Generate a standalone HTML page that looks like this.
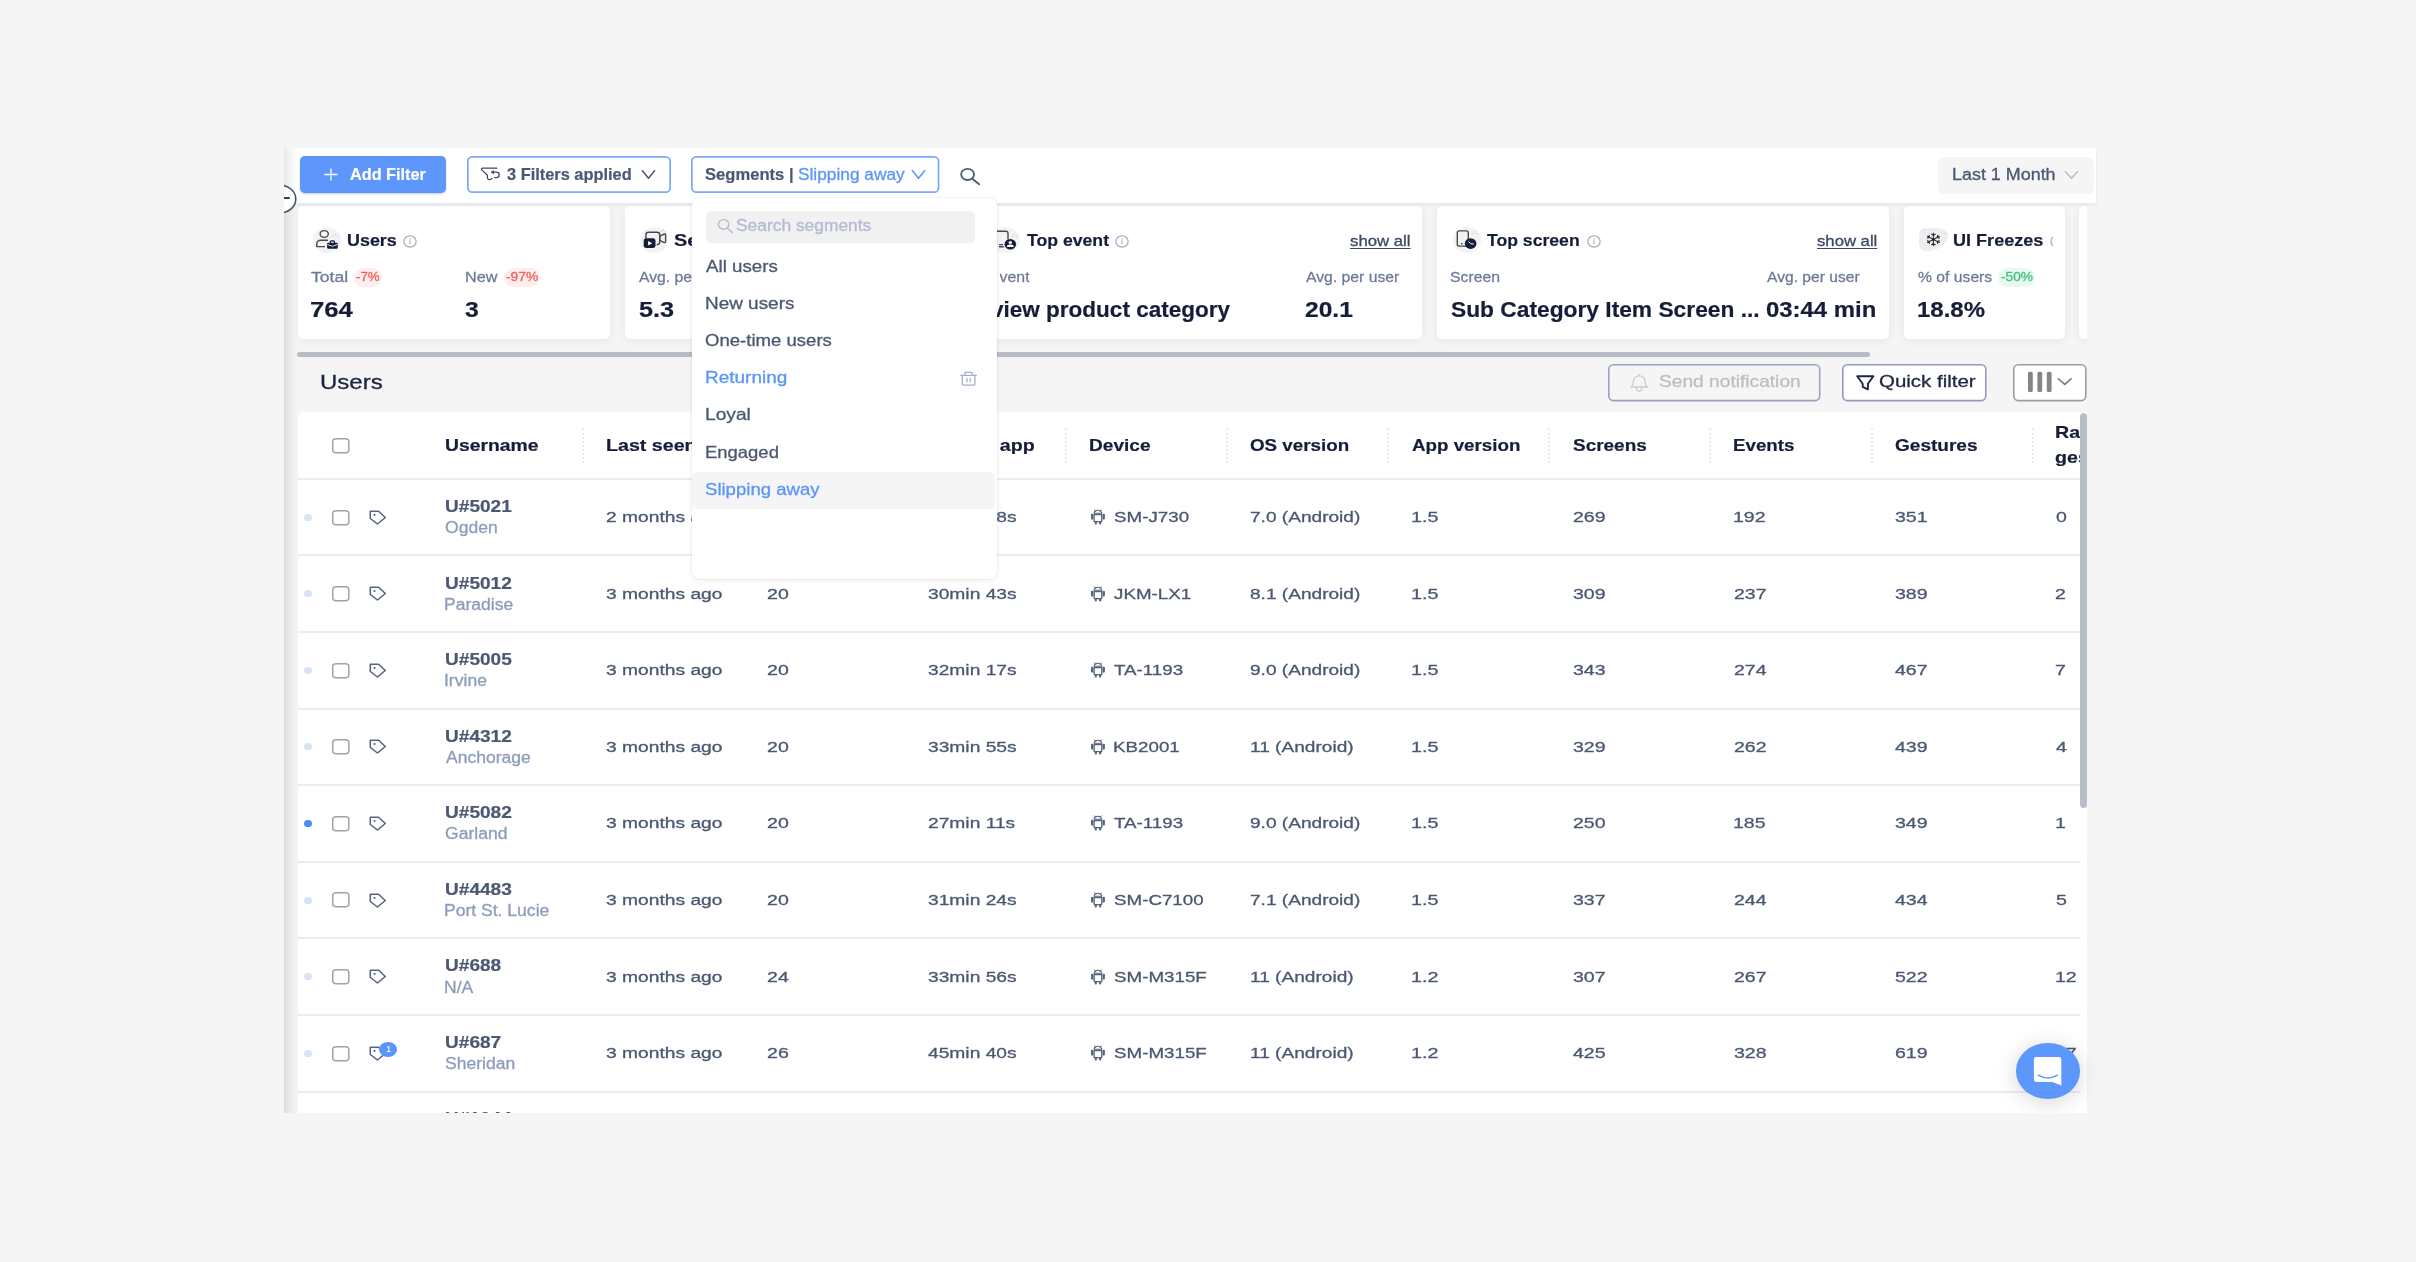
<!DOCTYPE html>
<html lang="en"><head><meta charset="utf-8"><title>Users</title>
<style>
*{box-sizing:border-box;margin:0;padding:0}
html,body{width:2416px;height:1262px;overflow:hidden;background:#f5f5f5}
body{position:relative;font-family:"Liberation Sans",sans-serif}
.abs,.t,svg.i{position:absolute}
.t{white-space:nowrap;line-height:1;transform-origin:0 50%;display:block}
#shot{will-change:transform;position:absolute;left:0;top:0;width:2416px;height:1262px;clip-path:polygon(284px 148px,2097px 148px,2097px 1112.5px,284px 1112.5px)}
#tbl{position:absolute;left:0;top:0;width:2416px;height:1262px;clip-path:polygon(297px 412px,2080.4px 412px,2080.4px 1113px,297px 1113px)}
#cards{position:absolute;left:0;top:0;width:2416px;height:1262px;clip-path:polygon(297px 200px,2087px 200px,2087px 362px,297px 362px)}
.card{position:absolute;top:206px;height:133px;background:#fff;border-radius:5px;box-shadow:0 1px 10px rgba(0,0,0,.07)}
.blob{position:absolute;width:28px;height:26px;border-radius:50%;background:#f3f3f3}
.btn{position:absolute;border-radius:5px}
.badge{position:absolute;border-radius:10px}
.row{position:absolute;left:297.5px;width:1783px;height:2px;background:#ececec}
.dot{position:absolute;left:304px;width:8.3px;height:7px;border-radius:50%;background:#d8e3f3}
.sep{position:absolute;top:428px;height:35px;width:0;border-left:2.6px dotted #e9e9e9}
.r{-webkit-text-stroke:.3px currentColor}
.b{font-weight:700;-webkit-text-stroke:.2px currentColor}
.u{text-decoration:underline;text-underline-offset:1.5px;text-decoration-thickness:1px}
</style></head>
<body>
<div id="shot">
<section id="cards" aria-label="Summary cards">
<div class="card" style="left:297.5px;width:312.8px"></div>
<div class="card" style="left:625px;width:337.0px"></div>
<div class="card" style="left:977px;width:445.4px"></div>
<div class="card" style="left:1437.2px;width:452.2px"></div>
<div class="card" style="left:1904.2px;width:161.1px"></div>
<div class="card" style="left:2079.2px;width:220.8px"></div>
<div class="blob" style="left:313.3px;top:227px"></div>
<div class="blob" style="left:639.8px;top:227px"></div>
<div class="blob" style="left:992px;top:227px"></div>
<div class="blob" style="left:1452.7px;top:227px"></div>
<svg class="i" style="left:312px;top:226px" width="30" height="28" viewBox="312 226 30 28"><ellipse cx="324.2" cy="234" rx="4.1" ry="3.4" fill="none" stroke="#4a4a4a" stroke-width="1.4"/><path d="M328 240.3h-7.4a3.8 3.4 0 0 0 -3.8 3.4v2.9h8.2" fill="none" stroke="#4a4a4a" stroke-width="1.4" stroke-linejoin="round"/><path d="M330.3 243v-1.1a1 1 0 0 1 1-1h2.2a1 1 0 0 1 1 1v1.1" fill="none" stroke="#151d38" stroke-width="1.2"/><rect x="327.1" y="242.7" width="10.6" height="6" rx="1.2" fill="#151d38"/><path d="M327.6 244.6l4.8 1.7 4.8-1.7" fill="none" stroke="#fff" stroke-width=".9"/><path d="M332.6 236l1.3-.5M335.2 233.6l.5 1M337.2 235.8l1.4.5" stroke="#c5d3ee" stroke-width="1" stroke-linecap="round" fill="none"/></svg>
<svg class="i" style="left:640px;top:226px" width="30" height="28" viewBox="640 226 30 28"><path d="M645.9 238.5v-3.7a2.8 2.5 0 0 1 2.8-2.5h8.2a2.8 2.5 0 0 1 2.8 2.5v7.4a2.8 2.5 0 0 1 -2.6 2.4" fill="none" stroke="#4a4a4a" stroke-width="1.4" stroke-linecap="round"/><path d="M659.8 236.2l4.6-2.2a.9 .9 0 0 1 1.2 .8v7a.9 .9 0 0 1 -1.2 .8l-4.6-2.2z" fill="none" stroke="#4a4a4a" stroke-width="1.4" stroke-linejoin="round"/><rect x="643.7" y="238.3" width="11.8" height="9.6" rx="2.6" fill="#151d38"/><path d="M648.1 241l4.2 2.2-4.2 2.2z" fill="#fff"/><path d="M660.4 231.8l1.3-.5M663 229.4l.5 1M665 231.6l1.4.5" stroke="#c5d3ee" stroke-width="1" stroke-linecap="round" fill="none"/></svg>
<svg class="i" style="left:992px;top:226px" width="30" height="28" viewBox="992 226 30 28"><path d="M996.5 231.3h9.3a2.2 2 0 0 1 2.2 2v6.2M999 246.8h5M999 244.6h4" fill="none" stroke="#4a4a4a" stroke-width="1.4"/><ellipse cx="1010.3" cy="244.2" rx="5.8" ry="5.3" fill="#151d38"/><ellipse cx="1010.3" cy="242.4" rx="1.7" ry="1.5" fill="#fff"/><path d="M1006.9 246.9q0-2.3 3.4-2.3t3.4 2.3z" fill="#fff"/><path d="M1011.6 236.6l1.3-.5M1014.2 234.2l.5 1M1016.2 236.4l1.4.5" stroke="#c5d3ee" stroke-width="1" stroke-linecap="round" fill="none"/></svg>
<svg class="i" style="left:1452px;top:226px" width="30" height="28" viewBox="1452 226 30 28"><rect x="1457.3" y="230.9" width="11" height="15.2" rx="1.8" fill="none" stroke="#4a4a4a" stroke-width="1.4"/><rect x="1461" y="243" width="1.6" height="1.4" fill="#4a4a4a"/><ellipse cx="1470.6" cy="243.6" rx="5.8" ry="5.3" fill="#151d38"/><path d="M1468.7 241.9q1 2.4 4.6 2.3" fill="none" stroke="#fff" stroke-width="1" stroke-linecap="round"/><path d="M1472.2 233.9l1.3-.5M1474.8 231.5l.5 1M1476.8 233.7l1.4.5" stroke="#c5d3ee" stroke-width="1" stroke-linecap="round" fill="none"/></svg>
<svg class="i" style="left:1916px;top:224px" width="36" height="30" viewBox="1916 224 36 30"><path d="M1919 234q1-6 12-6.2q14-.4 17 5.2q1.5 6-5 12q-7 6.5-18 6q-6-1-6-8.5z" fill="#eeeeee"/><path d="M1933.4 239.4l0 6.1M1933.4 243.55l-1.72 1.09M1933.4 243.55l1.72 1.09M1933.4 239.4l-5.89 3.05M1929.4 241.47l-1.9 -0.8M1929.4 241.47l-0.18 1.89M1933.4 239.4l-5.89 -3.05M1929.4 237.33l-0.18 -1.89M1929.4 237.33l-1.9 0.8M1933.4 239.4l-0 -6.1M1933.4 235.25l1.72 -1.09M1933.4 235.25l-1.72 -1.09M1933.4 239.4l5.89 -3.05M1937.4 237.33l1.9 0.8M1937.4 237.33l0.18 -1.89M1933.4 239.4l5.89 3.05M1937.4 241.47l0.18 1.89M1937.4 241.47l1.9 -0.8" fill="none" stroke="#2b2f3c" stroke-width="1.15" stroke-linecap="round"/><circle cx="1933.4" cy="239.4" r="1.1" fill="#151d38"/><path d="M1921.6 230.8l1-.8M1924 228.8l.6 .9M1924 232.6l.6 .6" stroke="#c5d3ee" stroke-width="1" stroke-linecap="round"/><ellipse cx="1944.9" cy="233.6" rx="1" ry=".9" fill="#c5d3ee"/></svg>
<span class="t b" style="left:346.5px;top:232.0px;font-size:17.3px;transform:scaleX(1.036);color:#151d38;">Users</span>
<span class="t b" style="left:674.4px;top:232.0px;font-size:17.3px;transform:scaleX(1.150);color:#151d38;">Sessions</span>
<span class="t b" style="left:1026.5px;top:232.0px;font-size:17.3px;transform:scaleX(1.021);color:#151d38;">Top event</span>
<span class="t b" style="left:1487.0px;top:232.0px;font-size:17.3px;transform:scaleX(1.019);color:#151d38;">Top screen</span>
<span class="t b" style="left:1953.3px;top:232.0px;font-size:17.3px;transform:scaleX(1.045);color:#151d38;">UI Freezes</span>
<span class="t r" style="left:310.6px;top:268.7px;font-size:15.26px;transform:scaleX(1.150);color:#6d7b99;">Total</span>
<span class="t r" style="left:464.5px;top:268.7px;font-size:15.26px;transform:scaleX(1.061);color:#6d7b99;">New</span>
<span class="t r" style="left:638.7px;top:268.7px;font-size:15.26px;transform:scaleX(1.031);color:#6d7b99;">Avg. per user</span>
<span class="t r" style="left:989.0px;top:268.7px;font-size:15.26px;transform:scaleX(1.040);color:#6d7b99;clip-path:inset(0 0 0 10.2px);">Event</span>
<span class="t r" style="left:1305.5px;top:268.7px;font-size:15.26px;transform:scaleX(1.031);color:#6d7b99;">Avg. per user</span>
<span class="t r" style="left:1450.4px;top:268.7px;font-size:15.26px;transform:scaleX(1.033);color:#6d7b99;">Screen</span>
<span class="t r" style="left:1766.7px;top:268.7px;font-size:15.26px;transform:scaleX(1.025);color:#6d7b99;">Avg. per user</span>
<span class="t r" style="left:1917.6px;top:268.7px;font-size:15.26px;transform:scaleX(1.030);color:#6d7b99;">% of users</span>
<span class="t b" style="left:309.8px;top:298.8px;font-size:22.09px;transform:scaleX(1.162);color:#151d38;">764</span>
<span class="t b" style="left:465.2px;top:298.8px;font-size:22.09px;transform:scaleX(1.120);color:#151d38;">3</span>
<span class="t b" style="left:638.6px;top:298.8px;font-size:22.09px;transform:scaleX(1.145);color:#151d38;">5.3</span>
<span class="t b" style="left:991.1px;top:298.8px;font-size:22.09px;transform:scaleX(1.020);color:#151d38;">view product category</span>
<span class="t b" style="left:1304.8px;top:298.8px;font-size:22.09px;transform:scaleX(1.112);color:#151d38;">20.1</span>
<span class="t b" style="left:1450.5px;top:298.8px;font-size:22.09px;transform:scaleX(1.031);color:#151d38;">Sub Category Item Screen ...</span>
<span class="t b" style="left:1766.0px;top:298.8px;font-size:22.09px;transform:scaleX(1.083);color:#151d38;">03:44 min</span>
<span class="t b" style="left:1916.8px;top:298.8px;font-size:22.09px;transform:scaleX(1.086);color:#151d38;">18.8%</span>
<span class="t u r" style="left:1349.6px;top:233.1px;font-size:15.12px;transform:scaleX(1.109);color:#3b4863;">show all</span>
<span class="t u r" style="left:1816.9px;top:233.1px;font-size:15.12px;transform:scaleX(1.105);color:#3b4863;">show all</span>
<div class="badge" style="left:354px;top:267.5px;width:27.6px;height:19.4px;background:#fdeded"></div>
<span class="t r" style="left:355.9px;top:271.2px;font-size:12.94px;transform:scaleX(1.027);color:#f0605d;">-7%</span>
<div class="badge" style="left:504px;top:267.5px;width:36.3px;height:19.4px;background:#fdeded"></div>
<span class="t r" style="left:506.4px;top:271.2px;font-size:12.94px;transform:scaleX(1.066);color:#f0605d;">-97%</span>
<div class="badge" style="left:1998.4px;top:267.5px;width:36.6px;height:19.4px;background:#e9f9f0"></div>
<span class="t r" style="left:2000.7px;top:271.2px;font-size:12.94px;transform:scaleX(1.059);color:#42c083;">-50%</span>
<svg class="i" style="left:403px;top:234.5px" width="14" height="13" viewBox="0 0 14 13"><ellipse cx="7" cy="6.5" rx="6.1" ry="5.6" fill="none" stroke="#a6acbb" stroke-width="1.25"/><path d="M7 5.6v3.6M7 3.3v1.1" stroke="#a6acbb" stroke-width="1.2"/></svg>
<svg class="i" style="left:1115.2px;top:234.5px" width="14" height="13" viewBox="0 0 14 13"><ellipse cx="7" cy="6.5" rx="6.1" ry="5.6" fill="none" stroke="#a6acbb" stroke-width="1.25"/><path d="M7 5.6v3.6M7 3.3v1.1" stroke="#a6acbb" stroke-width="1.2"/></svg>
<svg class="i" style="left:1586.6px;top:234.5px" width="14" height="13" viewBox="0 0 14 13"><ellipse cx="7" cy="6.5" rx="6.1" ry="5.6" fill="none" stroke="#a6acbb" stroke-width="1.25"/><path d="M7 5.6v3.6M7 3.3v1.1" stroke="#a6acbb" stroke-width="1.2"/></svg>
<svg class="i" style="left:2049.5px;top:234.5px;clip-path:inset(0 10.5px 0 0)" width="14" height="13" viewBox="0 0 14 13"><ellipse cx="7" cy="6.5" rx="6.1" ry="5.6" fill="none" stroke="#a6acbb" stroke-width="1.25"/><path d="M7 5.6v3.6M7 3.3v1.1" stroke="#a6acbb" stroke-width="1.2"/></svg>
<div class="abs" style="left:297.2px;top:351.9px;width:1572.8px;height:5.6px;border-radius:3px;background:#b7bcc7"></div>
</section>
<header id="filters">
<div class="abs" style="left:284px;top:148px;width:1812px;height:55.4px;background:#fff;box-shadow:0 1px 5px rgba(0,0,0,.085)"></div>
<div class="btn" style="left:300px;top:155.8px;width:146px;height:37px;background:#5e96fc;box-shadow:0 1px 2px rgba(60,110,220,.35)"></div>
<svg class="i" style="left:323.5px;top:167.5px" width="14" height="13" viewBox="0 0 14 13"><path d="M7 .5v12M.4 6.5h13.2" stroke="#fff" stroke-width="1.3"/></svg>
<span class="t b" style="left:349.6px;top:166.5px;font-size:16.72px;transform:scaleX(0.973);color:#fff;">Add Filter</span>
<svg class="i" style="left:464.8px;top:153.8px" width="208.0" height="41.0"><rect x="2.85" y="2.85" width="202.30" height="35.30" rx="4.5" ry="4.5" fill="#fff" stroke="#7ca7fb" stroke-width="1.7"/></svg>
<svg class="i" style="left:479px;top:165px" width="24" height="18" viewBox="479 165 24 18"><path d="M496.8 168.2h-14.2a1 1 0 0 0 -.8 1.7l5.6 5.4v2.6q.3 1.8 2.3 1.7q1.6-.1 2.4-1.2" fill="none" stroke="#3f4860" stroke-width="1.25" stroke-linecap="round" stroke-linejoin="round"/><path d="M491.6 172.2h4.6a3 2.7 0 0 1 0 5.4h-1.6" fill="none" stroke="#3f4860" stroke-width="1.25" stroke-linecap="round"/><path d="M493.8 170l-2.7 2.2 2.7 2.2z" fill="#3f4860"/></svg>
<span class="t b" style="left:507.3px;top:166.1px;font-size:16.28px;transform:scaleX(1.007);color:#4b5872;">3 Filters applied</span>
<svg class="i" style="left:640.5px;top:169px" width="15" height="11" viewBox="0 0 15 11"><path d="M1 1.2l6.5 8 6.5-8" fill="none" stroke="#4b5872" stroke-width="1.5"/></svg>
<svg class="i" style="left:688.8px;top:153.8px" width="252.4" height="41.0"><rect x="2.85" y="2.85" width="246.70" height="35.30" rx="4.5" ry="4.5" fill="#fff" stroke="#7ca7fb" stroke-width="1.7"/></svg>
<span class="t b" style="left:705.3px;top:166.1px;font-size:16.28px;transform:scaleX(1.020);color:#4b5872;">Segments |</span>
<span class="t r" style="left:798.3px;top:166.1px;font-size:16.28px;transform:scaleX(1.063);color:#5b95fb;">Slipping away</span>
<svg class="i" style="left:911.3px;top:169px" width="15" height="11" viewBox="0 0 15 11"><path d="M1 1.2l6.5 8 6.5-8" fill="none" stroke="#5b95fb" stroke-width="1.5"/></svg>
<svg class="i" style="left:959px;top:166px" width="22" height="20" viewBox="0 0 22 20"><ellipse cx="8.6" cy="8.4" rx="6.4" ry="5.6" fill="none" stroke="#4d5b76" stroke-width="1.8"/><path d="M13.300 12.700l6.800 5.500" stroke="#4d5b76" stroke-width="1.9" stroke-linecap="round"/></svg>
<div class="btn" style="left:1938.2px;top:157.3px;width:155.4px;height:36.4px;background:#f5f5f5;border-radius:6px"></div>
<span class="t r" style="left:1952.0px;top:166.1px;font-size:16.42px;transform:scaleX(1.092);color:#4b5872;">Last 1 Month</span>
<svg class="i" style="left:2063.5px;top:170px" width="15" height="10" viewBox="0 0 15 10"><path d="M1 1.2l6.5 7 6.5-7" fill="none" stroke="#b9b9b9" stroke-width="1.3"/></svg>
</header>
<div id="users-toolbar">
<span class="t r" style="left:319.9px;top:370.7px;font-size:21.08px;transform:scaleX(1.140);color:#1b2440;">Users</span>
<svg class="i" style="left:1606.4px;top:361.6px" width="216.5" height="41.4"><rect x="2.80" y="2.80" width="210.90" height="35.80" rx="4.5" ry="4.5" fill="none" stroke="#98a3bb" stroke-width="1.6"/></svg>
<svg class="i" style="left:1628px;top:372px" width="22" height="22" viewBox="1628 372 22 22"><path d="M1630.9 387h16.6q-2.5-1.8-2.5-5.3v-.6a5.8 5.3 0 0 0 -11.6 0v.6q0 3.5-2.5 5.3z" fill="none" stroke="#cbcbcb" stroke-width="1.3" stroke-linejoin="round"/><path d="M1636.3 387.5a2.9 3.6 0 0 0 5.8 0M1639.2 374.5v1.3" fill="none" stroke="#cbcbcb" stroke-width="1.3" stroke-linecap="round"/></svg>
<span class="t r" style="left:1658.9px;top:373.1px;font-size:17.15px;transform:scaleX(1.118);color:#bebebe;">Send notification</span>
<svg class="i" style="left:1839.6px;top:361.6px" width="148.6" height="41.4"><rect x="2.80" y="2.80" width="143.00" height="35.80" rx="4.5" ry="4.5" fill="#fff" stroke="#909cb7" stroke-width="1.6"/></svg>
<svg class="i" style="left:1854px;top:373px" width="24" height="20" viewBox="1854 373 24 20"><path d="M1857.2 376.3h16.2l-5.5 7.5v5.6l-5.2-2.5v-3.1z" fill="none" stroke="#1f2742" stroke-width="1.9" stroke-linejoin="round"/></svg>
<span class="t r" style="left:1878.8px;top:373.0px;font-size:17.01px;transform:scaleX(1.204);color:#1e2743;">Quick filter</span>
<svg class="i" style="left:2011.2px;top:361.6px" width="77.6" height="41.4"><rect x="2.80" y="2.80" width="72.00" height="35.80" rx="4.5" ry="4.5" fill="#fff" stroke="#9d9d9d" stroke-width="1.6"/></svg>
<svg class="i" style="left:2027px;top:371px" width="48" height="22" viewBox="0 0 48 22"><g fill="#868686"><rect x="1" y=".8" width="4.8" height="20.2" rx="1.6"/><rect x="10.4" y=".8" width="4.8" height="20.2" rx="1.6"/><rect x="19.8" y=".8" width="4.8" height="20.2" rx="1.6"/></g><path d="M31 7.4l6.8 6 6.8-6" fill="none" stroke="#7a7a7a" stroke-width="1.5"/></svg>
</div>
<section id="users" aria-label="Users table">
<div class="abs" style="left:297.5px;top:412.4px;width:1789.5px;height:720px;background:#fff;border-radius:6px 0 0 0"></div>
<div id="tbl">
<span class="t b" style="left:444.6px;top:437.8px;font-size:16.86px;transform:scaleX(1.146);color:#151d38;">Username</span>
<span class="t b" style="left:605.7px;top:437.8px;font-size:16.86px;transform:scaleX(1.165);color:#151d38;">Last seen</span>
<span class="t b" style="left:767.0px;top:437.8px;font-size:16.86px;transform:scaleX(1.165);color:#151d38;">Sessions</span>
<span class="t b" style="left:926.1px;top:437.8px;font-size:16.86px;transform:scaleX(1.165);color:#151d38;">Time in app</span>
<span class="t b" style="left:1089.3px;top:437.8px;font-size:16.86px;transform:scaleX(1.132);color:#151d38;">Device</span>
<span class="t b" style="left:1250.1px;top:437.8px;font-size:16.86px;transform:scaleX(1.114);color:#151d38;">OS version</span>
<span class="t b" style="left:1411.9px;top:437.8px;font-size:16.86px;transform:scaleX(1.112);color:#151d38;">App version</span>
<span class="t b" style="left:1572.9px;top:437.8px;font-size:16.86px;transform:scaleX(1.124);color:#151d38;">Screens</span>
<span class="t b" style="left:1733.4px;top:437.8px;font-size:16.86px;transform:scaleX(1.110);color:#151d38;">Events</span>
<span class="t b" style="left:1894.7px;top:437.8px;font-size:16.86px;transform:scaleX(1.129);color:#151d38;">Gestures</span>
<span class="t b" style="left:2054.9px;top:424.9px;font-size:16.86px;transform:scaleX(1.165);color:#151d38;">Rage</span>
<span class="t b" style="left:2055.4px;top:450.3px;font-size:16.86px;transform:scaleX(1.165);color:#151d38;">gestures</span>
<div class="sep" style="left:582.0px"></div>
<div class="sep" style="left:743.0px"></div>
<div class="sep" style="left:904.0px"></div>
<div class="sep" style="left:1065.1px"></div>
<div class="sep" style="left:1226.4px"></div>
<div class="sep" style="left:1387.3px"></div>
<div class="sep" style="left:1548.3px"></div>
<div class="sep" style="left:1709.4px"></div>
<div class="sep" style="left:1870.6px"></div>
<div class="sep" style="left:2031.7px"></div>
<svg class="i" style="left:330.2px;top:435.6px" width="21.6" height="19.4"><rect x="2.75" y="2.75" width="16.10" height="13.90" rx="3.4" ry="3" fill="#fff" stroke="#a2a2a2" stroke-width="1.5"/></svg>
<div class="row" style="top:477.8px"></div>
<div class="row" style="top:554px;height:1.5px"></div>
<div class="dot" style="top:513.7px"></div>
<svg class="i" style="left:330.2px;top:507.5px" width="21.6" height="19.4"><rect x="2.75" y="2.75" width="16.10" height="13.90" rx="3.4" ry="3" fill="#fff" stroke="#a2a2a2" stroke-width="1.5"/></svg>
<svg class="i" style="left:369px;top:509.6px" width="18" height="15" viewBox="0 0 18 15"><path d="M1.3 1.3h8.3l6.7 6.2-7.8 6.5-7.2-5.5z" fill="none" stroke="#566481" stroke-width="1.55" stroke-linejoin="round"/><ellipse cx="5.5" cy="4.9" rx="1.1" ry="1" fill="#566481"/></svg>
<span class="t b" style="left:444.5px;top:498.9px;font-size:16.86px;transform:scaleX(1.132);color:#4b5872;">U#5021</span>
<span class="t r" style="left:444.9px;top:520.1px;font-size:15.84px;transform:scaleX(1.108);color:#8d9cbc;">Ogden</span>
<svg class="i" style="left:1090.3px;top:509.1px" width="16" height="16" viewBox="0 0 16 16"><g fill="#56647f"><rect x="1" y="4.7" width="2.2" height="6" rx="1.1"/><rect x="12.700" y="4.7" width="2.2" height="6" rx="1.1"/><rect x="4.700" y="12" width="2.2" height="3.5" rx="1"/><rect x="9" y="12" width="2.2" height="3.5" rx="1"/></g><g fill="none" stroke="#56647f"><path d="M4.100 5.500h7.700v6.200a.9 .9 0 0 1 -.9 .9h-5.900a.9 .9 0 0 1 -.9-.9z" stroke-width="1.4"/><path d="M4.200 4.300a3.750 3 0 0 1 7.500 0z" stroke-width="1.1" stroke-linejoin="round"/><path d="M4.700 .9l1 1.600M11.200 .9l-1 1.600" stroke-width="1" stroke-linecap="round"/></g></svg>
<span class="t r" style="left:605.8px;top:509.0px;font-size:15.33px;transform:scaleX(1.254);color:#4b5872;">2 months ago</span>
<span class="t r" style="left:766.4px;top:509.0px;font-size:15.33px;transform:scaleX(1.276);color:#4b5872;">18</span>
<span class="t r" style="left:927.8px;top:509.0px;font-size:15.33px;transform:scaleX(1.253);color:#4b5872;">28min 38s</span>
<span class="t r" style="left:1113.5px;top:509.0px;font-size:15.33px;transform:scaleX(1.224);color:#4b5872;">SM-J730</span>
<span class="t r" style="left:1250.1px;top:509.0px;font-size:15.33px;transform:scaleX(1.245);color:#4b5872;">7.0 (Android)</span>
<span class="t r" style="left:1411.0px;top:509.0px;font-size:15.33px;transform:scaleX(1.292);color:#4b5872;">1.5</span>
<span class="t r" style="left:1572.6px;top:509.0px;font-size:15.33px;transform:scaleX(1.274);color:#4b5872;">269</span>
<span class="t r" style="left:1733.2px;top:509.0px;font-size:15.33px;transform:scaleX(1.274);color:#4b5872;">192</span>
<span class="t r" style="left:1894.8px;top:509.0px;font-size:15.33px;transform:scaleX(1.274);color:#4b5872;">351</span>
<span class="t r" style="left:2055.6px;top:509.0px;font-size:15.33px;transform:scaleX(1.274);color:#4b5872;">0</span>
<div class="row" style="top:631px;height:1.5px"></div>
<div class="dot" style="top:590.3px"></div>
<svg class="i" style="left:330.2px;top:584.1px" width="21.6" height="19.4"><rect x="2.75" y="2.75" width="16.10" height="13.90" rx="3.4" ry="3" fill="#fff" stroke="#a2a2a2" stroke-width="1.5"/></svg>
<svg class="i" style="left:369px;top:586.2px" width="18" height="15" viewBox="0 0 18 15"><path d="M1.3 1.3h8.3l6.7 6.2-7.8 6.5-7.2-5.5z" fill="none" stroke="#566481" stroke-width="1.55" stroke-linejoin="round"/><ellipse cx="5.5" cy="4.9" rx="1.1" ry="1" fill="#566481"/></svg>
<span class="t b" style="left:444.5px;top:575.5px;font-size:16.86px;transform:scaleX(1.132);color:#4b5872;">U#5012</span>
<span class="t r" style="left:444.4px;top:596.7px;font-size:15.84px;transform:scaleX(1.108);color:#8d9cbc;">Paradise</span>
<svg class="i" style="left:1090.3px;top:585.7px" width="16" height="16" viewBox="0 0 16 16"><g fill="#56647f"><rect x="1" y="4.7" width="2.2" height="6" rx="1.1"/><rect x="12.700" y="4.7" width="2.2" height="6" rx="1.1"/><rect x="4.700" y="12" width="2.2" height="3.5" rx="1"/><rect x="9" y="12" width="2.2" height="3.5" rx="1"/></g><g fill="none" stroke="#56647f"><path d="M4.100 5.500h7.700v6.200a.9 .9 0 0 1 -.9 .9h-5.900a.9 .9 0 0 1 -.9-.9z" stroke-width="1.4"/><path d="M4.200 4.300a3.750 3 0 0 1 7.500 0z" stroke-width="1.1" stroke-linejoin="round"/><path d="M4.700 .9l1 1.600M11.200 .9l-1 1.600" stroke-width="1" stroke-linecap="round"/></g></svg>
<span class="t r" style="left:606.0px;top:585.6px;font-size:15.33px;transform:scaleX(1.254);color:#4b5872;">3 months ago</span>
<span class="t r" style="left:766.8px;top:585.6px;font-size:15.33px;transform:scaleX(1.276);color:#4b5872;">20</span>
<span class="t r" style="left:928.0px;top:585.6px;font-size:15.33px;transform:scaleX(1.253);color:#4b5872;">30min 43s</span>
<span class="t r" style="left:1114.0px;top:585.6px;font-size:15.33px;transform:scaleX(1.224);color:#4b5872;">JKM-LX1</span>
<span class="t r" style="left:1250.3px;top:585.6px;font-size:15.33px;transform:scaleX(1.245);color:#4b5872;">8.1 (Android)</span>
<span class="t r" style="left:1411.0px;top:585.6px;font-size:15.33px;transform:scaleX(1.292);color:#4b5872;">1.5</span>
<span class="t r" style="left:1572.8px;top:585.6px;font-size:15.33px;transform:scaleX(1.274);color:#4b5872;">309</span>
<span class="t r" style="left:1733.6px;top:585.6px;font-size:15.33px;transform:scaleX(1.274);color:#4b5872;">237</span>
<span class="t r" style="left:1894.8px;top:585.6px;font-size:15.33px;transform:scaleX(1.274);color:#4b5872;">389</span>
<span class="t r" style="left:2055.4px;top:585.6px;font-size:15.33px;transform:scaleX(1.274);color:#4b5872;">2</span>
<div class="row" style="top:708px;height:1.5px"></div>
<div class="dot" style="top:666.9px"></div>
<svg class="i" style="left:330.2px;top:660.6px" width="21.6" height="19.4"><rect x="2.75" y="2.75" width="16.10" height="13.90" rx="3.4" ry="3" fill="#fff" stroke="#a2a2a2" stroke-width="1.5"/></svg>
<svg class="i" style="left:369px;top:662.8px" width="18" height="15" viewBox="0 0 18 15"><path d="M1.3 1.3h8.3l6.7 6.2-7.8 6.5-7.2-5.5z" fill="none" stroke="#566481" stroke-width="1.55" stroke-linejoin="round"/><ellipse cx="5.5" cy="4.9" rx="1.1" ry="1" fill="#566481"/></svg>
<span class="t b" style="left:444.5px;top:652.1px;font-size:16.86px;transform:scaleX(1.132);color:#4b5872;">U#5005</span>
<span class="t r" style="left:444.3px;top:673.2px;font-size:15.84px;transform:scaleX(1.108);color:#8d9cbc;">Irvine</span>
<svg class="i" style="left:1090.3px;top:662.2px" width="16" height="16" viewBox="0 0 16 16"><g fill="#56647f"><rect x="1" y="4.7" width="2.2" height="6" rx="1.1"/><rect x="12.700" y="4.7" width="2.2" height="6" rx="1.1"/><rect x="4.700" y="12" width="2.2" height="3.5" rx="1"/><rect x="9" y="12" width="2.2" height="3.5" rx="1"/></g><g fill="none" stroke="#56647f"><path d="M4.100 5.500h7.700v6.200a.9 .9 0 0 1 -.9 .9h-5.900a.9 .9 0 0 1 -.9-.9z" stroke-width="1.4"/><path d="M4.200 4.300a3.750 3 0 0 1 7.500 0z" stroke-width="1.1" stroke-linejoin="round"/><path d="M4.700 .9l1 1.600M11.200 .9l-1 1.600" stroke-width="1" stroke-linecap="round"/></g></svg>
<span class="t r" style="left:606.0px;top:662.2px;font-size:15.33px;transform:scaleX(1.254);color:#4b5872;">3 months ago</span>
<span class="t r" style="left:766.8px;top:662.2px;font-size:15.33px;transform:scaleX(1.276);color:#4b5872;">20</span>
<span class="t r" style="left:928.0px;top:662.2px;font-size:15.33px;transform:scaleX(1.253);color:#4b5872;">32min 17s</span>
<span class="t r" style="left:1113.9px;top:662.2px;font-size:15.33px;transform:scaleX(1.224);color:#4b5872;">TA-1193</span>
<span class="t r" style="left:1250.2px;top:662.2px;font-size:15.33px;transform:scaleX(1.245);color:#4b5872;">9.0 (Android)</span>
<span class="t r" style="left:1411.0px;top:662.2px;font-size:15.33px;transform:scaleX(1.292);color:#4b5872;">1.5</span>
<span class="t r" style="left:1572.8px;top:662.2px;font-size:15.33px;transform:scaleX(1.274);color:#4b5872;">343</span>
<span class="t r" style="left:1733.6px;top:662.2px;font-size:15.33px;transform:scaleX(1.274);color:#4b5872;">274</span>
<span class="t r" style="left:1895.0px;top:662.2px;font-size:15.33px;transform:scaleX(1.274);color:#4b5872;">467</span>
<span class="t r" style="left:2055.4px;top:662.2px;font-size:15.33px;transform:scaleX(1.274);color:#4b5872;">7</span>
<div class="row" style="top:784px;height:1.5px"></div>
<div class="dot" style="top:743.4px"></div>
<svg class="i" style="left:330.2px;top:737.2px" width="21.6" height="19.4"><rect x="2.75" y="2.75" width="16.10" height="13.90" rx="3.4" ry="3" fill="#fff" stroke="#a2a2a2" stroke-width="1.5"/></svg>
<svg class="i" style="left:369px;top:739.3px" width="18" height="15" viewBox="0 0 18 15"><path d="M1.3 1.3h8.3l6.7 6.2-7.8 6.5-7.2-5.5z" fill="none" stroke="#566481" stroke-width="1.55" stroke-linejoin="round"/><ellipse cx="5.5" cy="4.9" rx="1.1" ry="1" fill="#566481"/></svg>
<span class="t b" style="left:444.5px;top:728.7px;font-size:16.86px;transform:scaleX(1.132);color:#4b5872;">U#4312</span>
<span class="t r" style="left:445.6px;top:749.8px;font-size:15.84px;transform:scaleX(1.108);color:#8d9cbc;">Anchorage</span>
<svg class="i" style="left:1090.3px;top:738.8px" width="16" height="16" viewBox="0 0 16 16"><g fill="#56647f"><rect x="1" y="4.7" width="2.2" height="6" rx="1.1"/><rect x="12.700" y="4.7" width="2.2" height="6" rx="1.1"/><rect x="4.700" y="12" width="2.2" height="3.5" rx="1"/><rect x="9" y="12" width="2.2" height="3.5" rx="1"/></g><g fill="none" stroke="#56647f"><path d="M4.100 5.500h7.700v6.200a.9 .9 0 0 1 -.9 .9h-5.900a.9 .9 0 0 1 -.9-.9z" stroke-width="1.4"/><path d="M4.200 4.300a3.750 3 0 0 1 7.500 0z" stroke-width="1.1" stroke-linejoin="round"/><path d="M4.700 .9l1 1.600M11.200 .9l-1 1.600" stroke-width="1" stroke-linecap="round"/></g></svg>
<span class="t r" style="left:606.0px;top:738.7px;font-size:15.33px;transform:scaleX(1.254);color:#4b5872;">3 months ago</span>
<span class="t r" style="left:766.8px;top:738.7px;font-size:15.33px;transform:scaleX(1.276);color:#4b5872;">20</span>
<span class="t r" style="left:928.0px;top:738.7px;font-size:15.33px;transform:scaleX(1.253);color:#4b5872;">33min 55s</span>
<span class="t r" style="left:1113.0px;top:738.7px;font-size:15.33px;transform:scaleX(1.224);color:#4b5872;">KB2001</span>
<span class="t r" style="left:1249.8px;top:738.7px;font-size:15.33px;transform:scaleX(1.245);color:#4b5872;">11 (Android)</span>
<span class="t r" style="left:1411.0px;top:738.7px;font-size:15.33px;transform:scaleX(1.292);color:#4b5872;">1.5</span>
<span class="t r" style="left:1572.8px;top:738.7px;font-size:15.33px;transform:scaleX(1.274);color:#4b5872;">329</span>
<span class="t r" style="left:1733.6px;top:738.7px;font-size:15.33px;transform:scaleX(1.274);color:#4b5872;">262</span>
<span class="t r" style="left:1895.0px;top:738.7px;font-size:15.33px;transform:scaleX(1.274);color:#4b5872;">439</span>
<span class="t r" style="left:2055.8px;top:738.7px;font-size:15.33px;transform:scaleX(1.274);color:#4b5872;">4</span>
<div class="row" style="top:861px;height:1.5px"></div>
<div class="dot" style="top:820.0px;background:#4a8df6"></div>
<svg class="i" style="left:330.2px;top:813.8px" width="21.6" height="19.4"><rect x="2.75" y="2.75" width="16.10" height="13.90" rx="3.4" ry="3" fill="#fff" stroke="#a2a2a2" stroke-width="1.5"/></svg>
<svg class="i" style="left:369px;top:815.9px" width="18" height="15" viewBox="0 0 18 15"><path d="M1.3 1.3h8.3l6.7 6.2-7.8 6.5-7.2-5.5z" fill="none" stroke="#566481" stroke-width="1.55" stroke-linejoin="round"/><ellipse cx="5.5" cy="4.9" rx="1.1" ry="1" fill="#566481"/></svg>
<span class="t b" style="left:444.5px;top:805.2px;font-size:16.86px;transform:scaleX(1.132);color:#4b5872;">U#5082</span>
<span class="t r" style="left:444.9px;top:826.4px;font-size:15.84px;transform:scaleX(1.108);color:#8d9cbc;">Garland</span>
<svg class="i" style="left:1090.3px;top:815.4px" width="16" height="16" viewBox="0 0 16 16"><g fill="#56647f"><rect x="1" y="4.7" width="2.2" height="6" rx="1.1"/><rect x="12.700" y="4.7" width="2.2" height="6" rx="1.1"/><rect x="4.700" y="12" width="2.2" height="3.5" rx="1"/><rect x="9" y="12" width="2.2" height="3.5" rx="1"/></g><g fill="none" stroke="#56647f"><path d="M4.100 5.500h7.700v6.200a.9 .9 0 0 1 -.9 .9h-5.900a.9 .9 0 0 1 -.9-.9z" stroke-width="1.4"/><path d="M4.200 4.300a3.750 3 0 0 1 7.500 0z" stroke-width="1.1" stroke-linejoin="round"/><path d="M4.700 .9l1 1.600M11.200 .9l-1 1.600" stroke-width="1" stroke-linecap="round"/></g></svg>
<span class="t r" style="left:606.0px;top:815.3px;font-size:15.33px;transform:scaleX(1.254);color:#4b5872;">3 months ago</span>
<span class="t r" style="left:766.8px;top:815.3px;font-size:15.33px;transform:scaleX(1.276);color:#4b5872;">20</span>
<span class="t r" style="left:927.8px;top:815.3px;font-size:15.33px;transform:scaleX(1.253);color:#4b5872;">27min 11s</span>
<span class="t r" style="left:1113.9px;top:815.3px;font-size:15.33px;transform:scaleX(1.224);color:#4b5872;">TA-1193</span>
<span class="t r" style="left:1250.2px;top:815.3px;font-size:15.33px;transform:scaleX(1.245);color:#4b5872;">9.0 (Android)</span>
<span class="t r" style="left:1411.0px;top:815.3px;font-size:15.33px;transform:scaleX(1.292);color:#4b5872;">1.5</span>
<span class="t r" style="left:1572.6px;top:815.3px;font-size:15.33px;transform:scaleX(1.274);color:#4b5872;">250</span>
<span class="t r" style="left:1733.2px;top:815.3px;font-size:15.33px;transform:scaleX(1.274);color:#4b5872;">185</span>
<span class="t r" style="left:1894.8px;top:815.3px;font-size:15.33px;transform:scaleX(1.274);color:#4b5872;">349</span>
<span class="t r" style="left:2055.0px;top:815.3px;font-size:15.33px;transform:scaleX(1.274);color:#4b5872;">1</span>
<div class="row" style="top:937px;height:1.5px"></div>
<div class="dot" style="top:896.6px"></div>
<svg class="i" style="left:330.2px;top:890.4px" width="21.6" height="19.4"><rect x="2.75" y="2.75" width="16.10" height="13.90" rx="3.4" ry="3" fill="#fff" stroke="#a2a2a2" stroke-width="1.5"/></svg>
<svg class="i" style="left:369px;top:892.5px" width="18" height="15" viewBox="0 0 18 15"><path d="M1.3 1.3h8.3l6.7 6.2-7.8 6.5-7.2-5.5z" fill="none" stroke="#566481" stroke-width="1.55" stroke-linejoin="round"/><ellipse cx="5.5" cy="4.9" rx="1.1" ry="1" fill="#566481"/></svg>
<span class="t b" style="left:444.5px;top:881.8px;font-size:16.86px;transform:scaleX(1.132);color:#4b5872;">U#4483</span>
<span class="t r" style="left:444.4px;top:903.0px;font-size:15.84px;transform:scaleX(1.108);color:#8d9cbc;">Port St. Lucie</span>
<svg class="i" style="left:1090.3px;top:892.0px" width="16" height="16" viewBox="0 0 16 16"><g fill="#56647f"><rect x="1" y="4.7" width="2.2" height="6" rx="1.1"/><rect x="12.700" y="4.7" width="2.2" height="6" rx="1.1"/><rect x="4.700" y="12" width="2.2" height="3.5" rx="1"/><rect x="9" y="12" width="2.2" height="3.5" rx="1"/></g><g fill="none" stroke="#56647f"><path d="M4.100 5.500h7.700v6.200a.9 .9 0 0 1 -.9 .9h-5.900a.9 .9 0 0 1 -.9-.9z" stroke-width="1.4"/><path d="M4.200 4.300a3.750 3 0 0 1 7.500 0z" stroke-width="1.1" stroke-linejoin="round"/><path d="M4.700 .9l1 1.600M11.200 .9l-1 1.600" stroke-width="1" stroke-linecap="round"/></g></svg>
<span class="t r" style="left:606.0px;top:891.9px;font-size:15.33px;transform:scaleX(1.254);color:#4b5872;">3 months ago</span>
<span class="t r" style="left:766.8px;top:891.9px;font-size:15.33px;transform:scaleX(1.276);color:#4b5872;">20</span>
<span class="t r" style="left:928.0px;top:891.9px;font-size:15.33px;transform:scaleX(1.253);color:#4b5872;">31min 24s</span>
<span class="t r" style="left:1113.5px;top:891.9px;font-size:15.33px;transform:scaleX(1.224);color:#4b5872;">SM-C7100</span>
<span class="t r" style="left:1250.1px;top:891.9px;font-size:15.33px;transform:scaleX(1.245);color:#4b5872;">7.1 (Android)</span>
<span class="t r" style="left:1411.0px;top:891.9px;font-size:15.33px;transform:scaleX(1.292);color:#4b5872;">1.5</span>
<span class="t r" style="left:1572.8px;top:891.9px;font-size:15.33px;transform:scaleX(1.274);color:#4b5872;">337</span>
<span class="t r" style="left:1733.6px;top:891.9px;font-size:15.33px;transform:scaleX(1.274);color:#4b5872;">244</span>
<span class="t r" style="left:1895.0px;top:891.9px;font-size:15.33px;transform:scaleX(1.274);color:#4b5872;">434</span>
<span class="t r" style="left:2055.6px;top:891.9px;font-size:15.33px;transform:scaleX(1.274);color:#4b5872;">5</span>
<div class="row" style="top:1014px;height:1.5px"></div>
<div class="dot" style="top:973.2px"></div>
<svg class="i" style="left:330.2px;top:967.0px" width="21.6" height="19.4"><rect x="2.75" y="2.75" width="16.10" height="13.90" rx="3.4" ry="3" fill="#fff" stroke="#a2a2a2" stroke-width="1.5"/></svg>
<svg class="i" style="left:369px;top:969.1px" width="18" height="15" viewBox="0 0 18 15"><path d="M1.3 1.3h8.3l6.7 6.2-7.8 6.5-7.2-5.5z" fill="none" stroke="#566481" stroke-width="1.55" stroke-linejoin="round"/><ellipse cx="5.5" cy="4.9" rx="1.1" ry="1" fill="#566481"/></svg>
<span class="t b" style="left:444.5px;top:958.4px;font-size:16.86px;transform:scaleX(1.132);color:#4b5872;">U#688</span>
<span class="t r" style="left:444.4px;top:979.5px;font-size:15.84px;transform:scaleX(1.108);color:#8d9cbc;">N/A</span>
<svg class="i" style="left:1090.3px;top:968.6px" width="16" height="16" viewBox="0 0 16 16"><g fill="#56647f"><rect x="1" y="4.7" width="2.2" height="6" rx="1.1"/><rect x="12.700" y="4.7" width="2.2" height="6" rx="1.1"/><rect x="4.700" y="12" width="2.2" height="3.5" rx="1"/><rect x="9" y="12" width="2.2" height="3.5" rx="1"/></g><g fill="none" stroke="#56647f"><path d="M4.100 5.500h7.700v6.200a.9 .9 0 0 1 -.9 .9h-5.900a.9 .9 0 0 1 -.9-.9z" stroke-width="1.4"/><path d="M4.200 4.300a3.750 3 0 0 1 7.500 0z" stroke-width="1.1" stroke-linejoin="round"/><path d="M4.700 .9l1 1.600M11.200 .9l-1 1.600" stroke-width="1" stroke-linecap="round"/></g></svg>
<span class="t r" style="left:606.0px;top:968.5px;font-size:15.33px;transform:scaleX(1.254);color:#4b5872;">3 months ago</span>
<span class="t r" style="left:766.8px;top:968.5px;font-size:15.33px;transform:scaleX(1.276);color:#4b5872;">24</span>
<span class="t r" style="left:928.0px;top:968.5px;font-size:15.33px;transform:scaleX(1.253);color:#4b5872;">33min 56s</span>
<span class="t r" style="left:1113.5px;top:968.5px;font-size:15.33px;transform:scaleX(1.224);color:#4b5872;">SM-M315F</span>
<span class="t r" style="left:1249.8px;top:968.5px;font-size:15.33px;transform:scaleX(1.245);color:#4b5872;">11 (Android)</span>
<span class="t r" style="left:1411.0px;top:968.5px;font-size:15.33px;transform:scaleX(1.292);color:#4b5872;">1.2</span>
<span class="t r" style="left:1572.8px;top:968.5px;font-size:15.33px;transform:scaleX(1.274);color:#4b5872;">307</span>
<span class="t r" style="left:1733.6px;top:968.5px;font-size:15.33px;transform:scaleX(1.274);color:#4b5872;">267</span>
<span class="t r" style="left:1894.8px;top:968.5px;font-size:15.33px;transform:scaleX(1.274);color:#4b5872;">522</span>
<span class="t r" style="left:2055.0px;top:968.5px;font-size:15.33px;transform:scaleX(1.274);color:#4b5872;">12</span>
<div class="row" style="top:1091px;height:1.5px"></div>
<div class="dot" style="top:1049.7px"></div>
<svg class="i" style="left:330.2px;top:1043.5px" width="21.6" height="19.4"><rect x="2.75" y="2.75" width="16.10" height="13.90" rx="3.4" ry="3" fill="#fff" stroke="#a2a2a2" stroke-width="1.5"/></svg>
<svg class="i" style="left:369px;top:1045.6px" width="18" height="15" viewBox="0 0 18 15"><path d="M1.3 1.3h8.3l6.7 6.2-7.8 6.5-7.2-5.5z" fill="none" stroke="#566481" stroke-width="1.55" stroke-linejoin="round"/><ellipse cx="5.5" cy="4.9" rx="1.1" ry="1" fill="#566481"/></svg>
<div class="abs" style="left:379.3px;top:1041.6px;width:17.7px;height:15.2px;border-radius:50%;background:#5b95fb"></div>
<span class="t r" style="left:386.3px;top:1045.8px;font-size:8.28px;transform:scaleX(1.150);color:#fff;-webkit-text-stroke:0;">1</span>
<span class="t b" style="left:444.5px;top:1035.0px;font-size:16.86px;transform:scaleX(1.132);color:#4b5872;">U#687</span>
<span class="t r" style="left:445.0px;top:1056.1px;font-size:15.84px;transform:scaleX(1.108);color:#8d9cbc;">Sheridan</span>
<svg class="i" style="left:1090.3px;top:1045.1px" width="16" height="16" viewBox="0 0 16 16"><g fill="#56647f"><rect x="1" y="4.7" width="2.2" height="6" rx="1.1"/><rect x="12.700" y="4.7" width="2.2" height="6" rx="1.1"/><rect x="4.700" y="12" width="2.2" height="3.5" rx="1"/><rect x="9" y="12" width="2.2" height="3.5" rx="1"/></g><g fill="none" stroke="#56647f"><path d="M4.100 5.500h7.700v6.200a.9 .9 0 0 1 -.9 .9h-5.900a.9 .9 0 0 1 -.9-.9z" stroke-width="1.4"/><path d="M4.200 4.300a3.750 3 0 0 1 7.500 0z" stroke-width="1.1" stroke-linejoin="round"/><path d="M4.700 .9l1 1.600M11.200 .9l-1 1.600" stroke-width="1" stroke-linecap="round"/></g></svg>
<span class="t r" style="left:606.0px;top:1045.0px;font-size:15.33px;transform:scaleX(1.254);color:#4b5872;">3 months ago</span>
<span class="t r" style="left:766.8px;top:1045.0px;font-size:15.33px;transform:scaleX(1.276);color:#4b5872;">26</span>
<span class="t r" style="left:928.3px;top:1045.0px;font-size:15.33px;transform:scaleX(1.253);color:#4b5872;">45min 40s</span>
<span class="t r" style="left:1113.5px;top:1045.0px;font-size:15.33px;transform:scaleX(1.224);color:#4b5872;">SM-M315F</span>
<span class="t r" style="left:1249.8px;top:1045.0px;font-size:15.33px;transform:scaleX(1.245);color:#4b5872;">11 (Android)</span>
<span class="t r" style="left:1411.0px;top:1045.0px;font-size:15.33px;transform:scaleX(1.292);color:#4b5872;">1.2</span>
<span class="t r" style="left:1573.0px;top:1045.0px;font-size:15.33px;transform:scaleX(1.274);color:#4b5872;">425</span>
<span class="t r" style="left:1733.8px;top:1045.0px;font-size:15.33px;transform:scaleX(1.274);color:#4b5872;">328</span>
<span class="t r" style="left:1894.6px;top:1045.0px;font-size:15.33px;transform:scaleX(1.274);color:#4b5872;">619</span>
<span class="t r" style="left:2055.0px;top:1045.0px;font-size:15.33px;transform:scaleX(1.274);color:#4b5872;">17</span>
<div class="row" style="top:1167px;height:1.5px"></div>
<div class="dot" style="top:1126.3px"></div>
<svg class="i" style="left:330.2px;top:1120.1px" width="21.6" height="19.4"><rect x="2.75" y="2.75" width="16.10" height="13.90" rx="3.4" ry="3" fill="#fff" stroke="#a2a2a2" stroke-width="1.5"/></svg>
<svg class="i" style="left:369px;top:1122.2px" width="18" height="15" viewBox="0 0 18 15"><path d="M1.3 1.3h8.3l6.7 6.2-7.8 6.5-7.2-5.5z" fill="none" stroke="#566481" stroke-width="1.55" stroke-linejoin="round"/><ellipse cx="5.5" cy="4.9" rx="1.1" ry="1" fill="#566481"/></svg>
<span class="t b" style="left:444.5px;top:1110.6px;font-size:16.86px;transform:scaleX(1.132);color:#4b5872;">U#1044</span>
<span class="t r" style="left:445.3px;top:1132.7px;font-size:15.84px;transform:scaleX(1.108);color:#8d9cbc;">Tampa</span>
<svg class="i" style="left:1090.3px;top:1121.7px" width="16" height="16" viewBox="0 0 16 16"><g fill="#56647f"><rect x="1" y="4.7" width="2.2" height="6" rx="1.1"/><rect x="12.700" y="4.7" width="2.2" height="6" rx="1.1"/><rect x="4.700" y="12" width="2.2" height="3.5" rx="1"/><rect x="9" y="12" width="2.2" height="3.5" rx="1"/></g><g fill="none" stroke="#56647f"><path d="M4.100 5.500h7.700v6.200a.9 .9 0 0 1 -.9 .9h-5.900a.9 .9 0 0 1 -.9-.9z" stroke-width="1.4"/><path d="M4.200 4.300a3.750 3 0 0 1 7.500 0z" stroke-width="1.1" stroke-linejoin="round"/><path d="M4.700 .9l1 1.600M11.200 .9l-1 1.600" stroke-width="1" stroke-linecap="round"/></g></svg>
<span class="t r" style="left:606.0px;top:1121.6px;font-size:15.33px;transform:scaleX(1.254);color:#4b5872;">3 months ago</span>
<span class="t r" style="left:766.8px;top:1121.6px;font-size:15.33px;transform:scaleX(1.276);color:#4b5872;">27</span>
<span class="t r" style="left:928.3px;top:1121.6px;font-size:15.33px;transform:scaleX(1.253);color:#4b5872;">41min 02s</span>
<span class="t r" style="left:1113.5px;top:1121.6px;font-size:15.33px;transform:scaleX(1.224);color:#4b5872;">SM-A515F</span>
<span class="t r" style="left:1249.8px;top:1121.6px;font-size:15.33px;transform:scaleX(1.245);color:#4b5872;">10 (Android)</span>
<span class="t r" style="left:1411.0px;top:1121.6px;font-size:15.33px;transform:scaleX(1.292);color:#4b5872;">1.2</span>
<span class="t r" style="left:1572.8px;top:1121.6px;font-size:15.33px;transform:scaleX(1.274);color:#4b5872;">398</span>
<span class="t r" style="left:1733.8px;top:1121.6px;font-size:15.33px;transform:scaleX(1.274);color:#4b5872;">301</span>
<span class="t r" style="left:1894.8px;top:1121.6px;font-size:15.33px;transform:scaleX(1.274);color:#4b5872;">577</span>
<span class="t r" style="left:2055.5px;top:1121.6px;font-size:15.33px;transform:scaleX(1.274);color:#4b5872;">9</span>
</div>
<div class="abs" style="left:2080.4px;top:412.6px;width:6.5px;height:395px;border-radius:3.5px;background:#b8bdc8"></div>
</section>
<div id="segments-menu" role="listbox">
<div class="abs" style="left:691.6px;top:198.4px;width:305.6px;height:381px;background:#fff;border-radius:8px;box-shadow:0 0 0 1px rgba(0,0,0,.04),0 2px 6px rgba(0,0,0,.06)"></div>
<div class="abs" style="left:705.6px;top:210.5px;width:269.7px;height:32.2px;background:#f1f1f1;border-radius:5px"></div>
<svg class="i" style="left:716.8px;top:218px" width="17" height="16" viewBox="0 0 17 16"><ellipse cx="6.6" cy="6.4" rx="5.2" ry="4.8" fill="none" stroke="#b6bdd4" stroke-width="1.4"/><path d="M10.4 10l5 4.6" stroke="#b6bdd4" stroke-width="1.5" stroke-linecap="round"/></svg>
<span class="t r" style="left:736.0px;top:217.9px;font-size:15.84px;transform:scaleX(1.098);color:#b3bad2;">Search segments</span>
<div class="abs" style="left:692.4px;top:471.6px;width:303px;height:37px;background:#f5f5f5;border-radius:5px"></div>
<span class="t r" style="left:705.9px;top:258.6px;font-size:16.72px;transform:scaleX(1.121);color:#4b5872;">All users</span>
<span class="t r" style="left:704.6px;top:295.8px;font-size:16.72px;transform:scaleX(1.133);color:#4b5872;">New users</span>
<span class="t r" style="left:705.2px;top:333.0px;font-size:16.72px;transform:scaleX(1.111);color:#4b5872;">One-time users</span>
<span class="t r" style="left:704.6px;top:370.2px;font-size:16.72px;transform:scaleX(1.136);color:#5b95fb;">Returning</span>
<span class="t r" style="left:704.6px;top:407.4px;font-size:16.72px;transform:scaleX(1.148);color:#4b5872;">Loyal</span>
<span class="t r" style="left:704.7px;top:444.6px;font-size:16.72px;transform:scaleX(1.105);color:#4b5872;">Engaged</span>
<span class="t r" style="left:705.2px;top:481.8px;font-size:16.72px;transform:scaleX(1.111);color:#5b95fb;">Slipping away</span>
<svg class="i" style="left:959px;top:370px" width="20" height="18" viewBox="959 370 20 18"><path d="M960.8 375.3h15.6M965 375v-1.9a.9 .8 0 0 1 .9-.8h5.4a.9 .8 0 0 1 .9 .8v1.9M962.3 375.5v8.6a1 1 0 0 0 1 1h10.6a1 1 0 0 0 1-1v-8.6M967 378.4v3.7M970.2 378.4v3.7" fill="none" stroke="#a7acca" stroke-width="1.3" stroke-linecap="round"/></svg>
</div>
<div class="abs" style="left:2015.7px;top:1043px;width:64.7px;height:55.8px;border-radius:50%;background:#5e97fc;box-shadow:0 3px 22px rgba(0,0,0,.17)"></div>
<svg class="i" style="left:2033px;top:1056px" width="31" height="31" viewBox="0 0 31 31"><path d="M3.3 1h22.6a2.4 2.4 0 0 1 2.4 2.4V29.4l-8.6-3.5H3.3A2.4 2.4 0 0 1 .9 23.5V3.4A2.4 2.4 0 0 1 3.300 1z" fill="#fff"/><path d="M5.2 19.2q9.5 5.6 19.4 0" fill="none" stroke="#5e97fc" stroke-width="1.5" stroke-linecap="round"/></svg>
<div class="abs" style="left:284px;top:148px;width:14px;height:966px;background:linear-gradient(90deg,rgba(0,0,0,.09) 0,rgba(0,0,0,.04) 45%,rgba(0,0,0,0) 100%)"></div>
<svg class="i" style="left:266px;top:183px" width="34" height="32" viewBox="0 0 34 32"><ellipse cx="14" cy="16.1" rx="15.800" ry="13.900" fill="#fff" stroke="#414d69" stroke-width="1.5"/><path d="M17.500 15h5.400" stroke="#323e5c" stroke-width="2.100" stroke-linecap="round"/></svg>
</div>
</body></html>
